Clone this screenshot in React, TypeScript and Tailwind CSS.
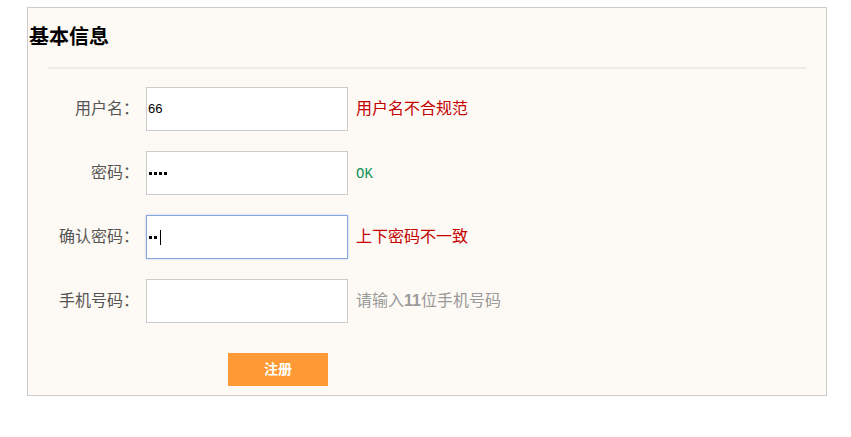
import React from "react";

const font = { fontFamily: '"Liberation Sans", "Noto Sans CJK SC", sans-serif' };

const Dots = ({ n, caret }: { n: number; caret?: boolean }) => (
  <div className="flex items-center gap-[2px] pl-[2px]">
    {Array.from({ length: n }).map((_, i) => (
      <span key={i} className="block w-[3px] h-[3px] bg-black" />
    ))}
    {caret && <span className="block w-px h-[15px] bg-black ml-[1px]" />}
  </div>
);

type Row = {
  label: string;
  field: React.ReactNode;
  focused?: boolean;
  msg: React.ReactNode;
};

const rows: Row[] = [
  {
    label: "用户名：",
    field: <span className="text-[13px] text-black pl-px">66</span>,
    msg: <span className="text-[16px] text-[#c40000]">用户名不合规范</span>,
  },
  {
    label: "密码：",
    field: <Dots n={4} />,
    msg: (
      <span
        className="text-[14px] text-[#12925a]"
        style={{ fontFamily: '"Liberation Mono", monospace' }}
      >
        OK
      </span>
    ),
  },
  {
    label: "确认密码：",
    field: <Dots n={2} caret />,
    focused: true,
    msg: <span className="text-[16px] text-[#c40000]">上下密码不一致</span>,
  },
  {
    label: "手机号码：",
    field: null,
    msg: (
      <span className="text-[16px] text-[#9a9a9a]">
        请输入<b className="font-bold">11</b>位手机号码
      </span>
    ),
  },
];

export default function App() {
  return (
    <div className="w-[851px] h-[437px] bg-white pt-[7px] pl-[27px]" style={font}>
      <div className="w-[800px] h-[389px] border border-[#cccccc] bg-[#fdf9f4] flex flex-col">
        <h2 className="mt-[17px] pl-px text-[20px] leading-[24px] font-bold text-black">
          基本信息
        </h2>
        <div className="mt-[18px] mx-[20px] h-[2px] bg-[#eeeae5]" />

        <div className="mt-[18px] flex flex-col gap-[20px]">
          {rows.map((r) => (
            <div key={r.label} className="flex items-center h-[44px]">
              <div className="w-[111px] text-right text-[16px] text-[#555555]">
                {r.label}
              </div>
              <div
                className={`ml-[7px] w-[202px] h-[44px] bg-white flex items-center ${
                  r.focused
                    ? "border border-[#86a6dc] shadow-[0_0_2px_#b3c8ee]"
                    : "border border-[#cccccc]"
                }`}
              >
                {r.field}
              </div>
              <div className="ml-[8px]">{r.msg}</div>
            </div>
          ))}
        </div>

        <button className="mt-[30px] ml-[200px] w-[100px] h-[33px] bg-[#fe9a35] text-white text-[14px] font-bold">
          注册
        </button>
      </div>
    </div>
  );
}
